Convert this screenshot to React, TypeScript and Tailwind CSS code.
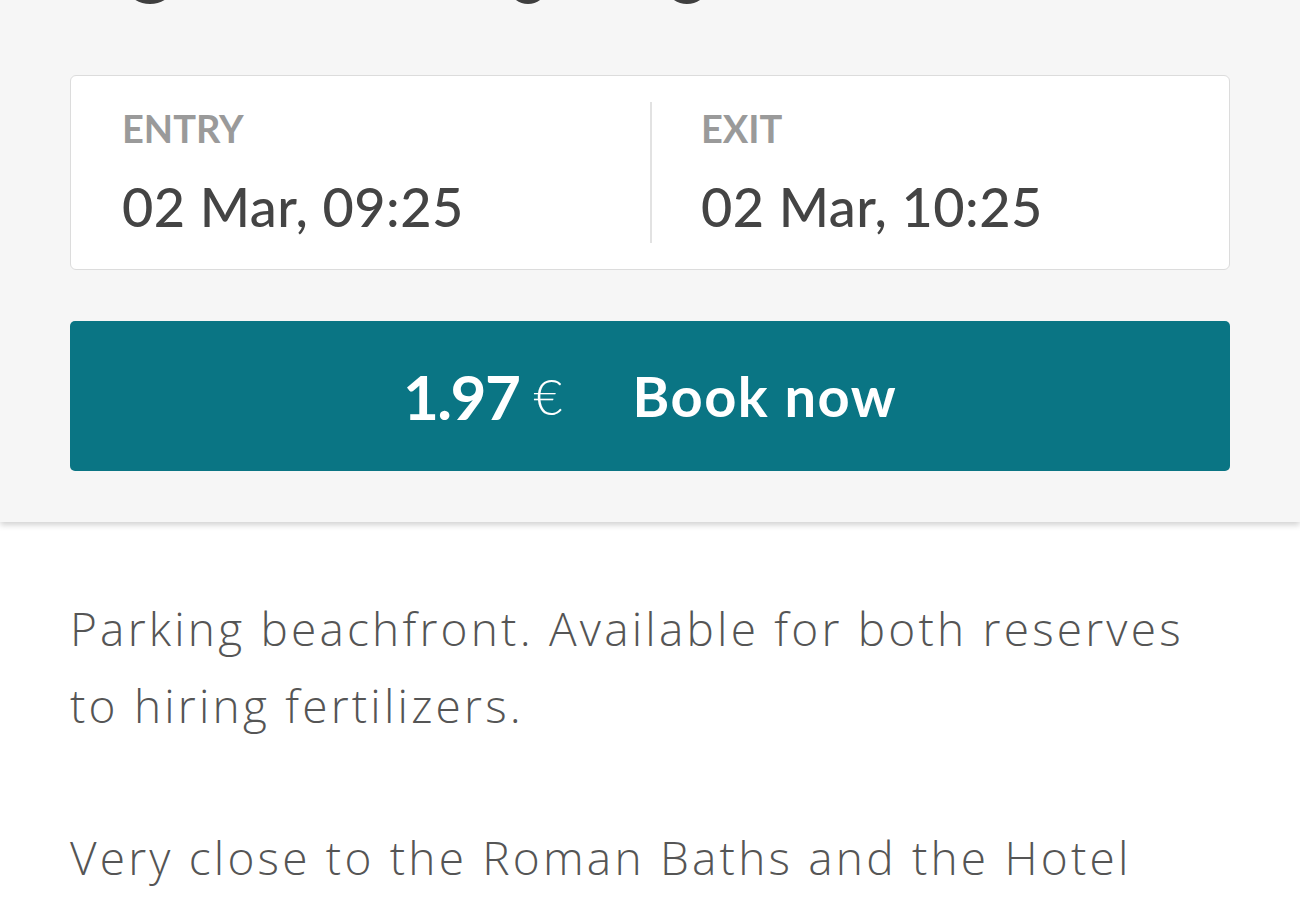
export default function App() {
  return (
    <div className="min-h-screen overflow-hidden bg-white font-['Lato',sans-serif]">
      <section className="bg-[#f6f6f6] px-[70px] pb-[51px] shadow-[0_3px_6px_rgba(0,0,0,0.18)] relative">
        {/* bottoms of the row above, cut off by the viewport */}
        <div className="h-[4px] overflow-hidden relative">
          <div className="absolute left-[52px] bottom-0 w-[56px] h-[56px] rounded-full border-[6px] border-[#3f3f3f]" />
          <div className="absolute left-[438px] bottom-0 w-[40px] h-[40px] rounded-full border-[6px] border-[#3f3f3f]" />
          <div className="absolute left-[594px] bottom-0 w-[46px] h-[46px] rounded-full border-[6px] border-[#3f3f3f]" />
        </div>

        <div className="mt-[71px] grid grid-cols-2 h-[195px] bg-white border border-[#dcdcdc] rounded-[6px]">
          <div className="pl-[51px] pt-[29px]">
            <div className="text-[38px] font-bold text-[#9a9a9a] leading-[46px]">ENTRY</div>
            <div className="mt-[24px] text-[54px] font-medium tracking-[0.5px] text-[#444] leading-[64px]">02 Mar, 09:25</div>
          </div>
          <div className="my-[26px] border-l-2 border-[#e2e2e2] pl-[49px] pt-[3px]">
            <div className="text-[38px] font-bold text-[#9a9a9a] leading-[46px]">EXIT</div>
            <div className="mt-[24px] text-[54px] font-medium tracking-[0.5px] text-[#444] leading-[64px]">02 Mar, 10:25</div>
          </div>
        </div>

        <button className="mt-[51px] w-full h-[150px] rounded-[5px] bg-[#0a7584] flex items-center justify-center text-white">
          <span className="text-[62px] font-bold tracking-[-1.5px]">1.97</span>
          <span className="ml-[14px] text-[50px] font-light">€</span>
          <span className="ml-[70px] text-[56px] font-bold tracking-[1.5px]">Book now</span>
        </button>
      </section>

      <div className="px-[70px] pt-[68px] text-[#555] font-['Open_Sans',sans-serif] font-light text-[46px] tracking-[3.2px] leading-[77px]">
        <p>Parking beachfront. Available for both reserves to hiring fertilizers.</p>
        <p className="mt-[75px]">Very close to the Roman Baths and the Hotel</p>
      </div>
    </div>
  );
}
